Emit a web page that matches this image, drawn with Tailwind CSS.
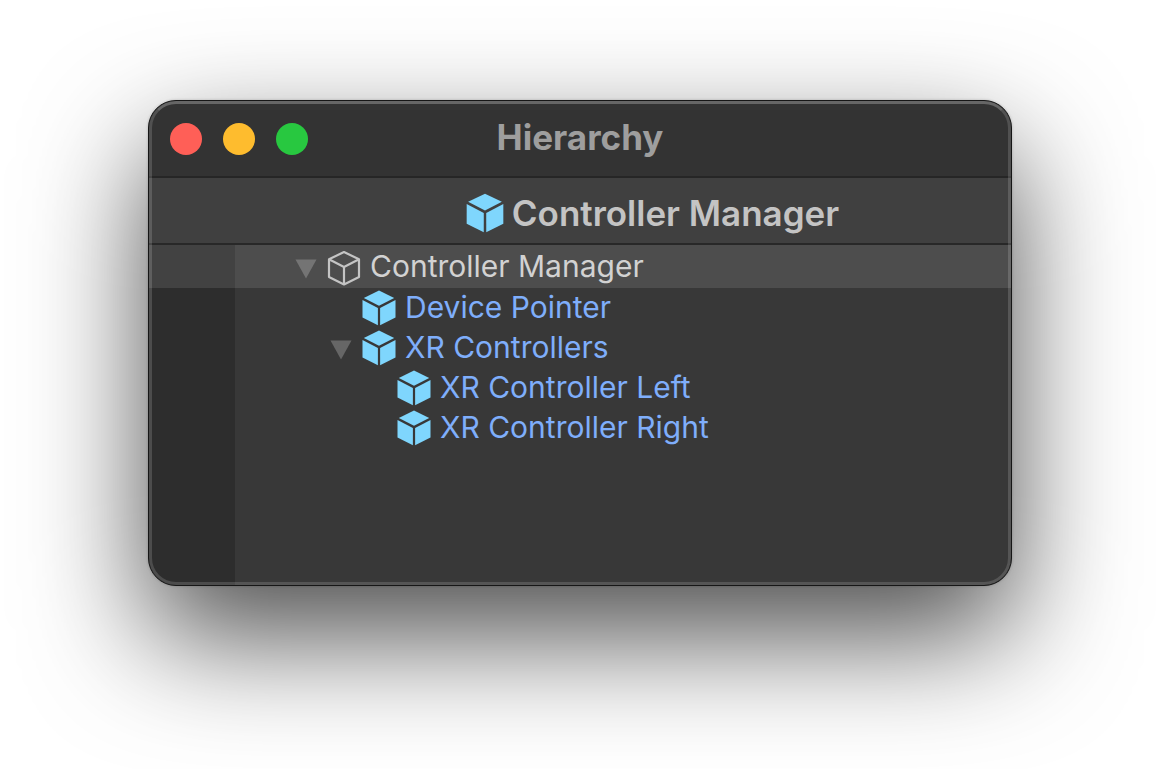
<!DOCTYPE html>
<html lang="en">
<head>
  <meta charset="UTF-8" />
  <meta name="viewport" content="width=device-width, initial-scale=1.0" />
  <title>Hierarchy</title>
  <script src="https://cdn.jsdelivr.net/npm/@tailwindcss/browser@4"></script>
</head>
<body class="bg-white min-h-screen px-[148px] py-[100px] font-['Inter','Liberation_Sans',sans-serif]">

  <!-- shared icons -->
  <svg class="hidden">
    <symbol id="cube" viewBox="0 0 34 36">
      <path d="M17 0.6 32.2 7.9 17 15.8 1.8 7.9Z" fill="#7fd6fd" />
      <path d="M0.5 10 15.9 18V35.3L0.5 27.6Z" fill="#7fd6fd" />
      <path d="M33.5 10 18.1 18V35.3L33.5 27.6Z" fill="#7fd6fd" />
    </symbol>
    <symbol id="cube-outline" viewBox="0 0 34 36">
      <path d="M17 2 32 9.3V27L17 34.4 2 27V9.3ZM2 9.3 17 17 32 9.3M17 17V34.4" fill="none" stroke="#c4c4c4" stroke-width="2.2" stroke-linejoin="round" />
    </symbol>
    <symbol id="arrow" viewBox="0 0 22 20">
      <path d="M0.5 0.5H21.5L11 19.5Z" fill="currentColor" />
    </symbol>
  </svg>

  <main class="relative border border-[#161616] rounded-[28px] overflow-hidden bg-[#383838] shadow-[0_50px_120px_rgba(0,0,0,0.7),0_0_3px_rgba(0,0,0,0.2)]">

    <header class="grid grid-cols-[1fr_auto_1fr] items-center h-[77px] px-[21px] bg-[#333333] border-b-2 border-[#262626]">
      <div class="flex gap-[21px]">
        <button aria-label="Close" class="w-8 h-8 rounded-full bg-[#ff5f57]"></button>
        <button aria-label="Minimize" class="w-8 h-8 rounded-full bg-[#febc2e]"></button>
        <button aria-label="Zoom" class="w-8 h-8 rounded-full bg-[#28c840]"></button>
      </div>
      <h1 class="text-[35px] leading-10 font-bold text-[#9e9e9e] pb-1">Hierarchy</h1>
    </header>

    <div class="flex items-center justify-center gap-2 h-[67px] pt-1 pl-[145px] bg-[#404040] border-b-2 border-[#282828]">
      <svg class="w-[38px] h-10"><use href="#cube" /></svg>
      <h2 class="text-[35px] leading-10 font-semibold text-[#c4c4c4]">Controller Manager</h2>
    </div>

    <ul class="text-[30px] leading-10 text-[#7faefb]">
      <li class="flex h-[43px] bg-[#4d4d4d] text-[#d2d2d2]">
        <span class="w-[86px] bg-[#424242]"></span>
        <div class="flex items-center pl-[60px]">
          <button aria-label="Collapse Controller Manager" class="mt-1 text-[#747474]"><svg class="w-[22px] h-5"><use href="#arrow" /></svg></button>
          <svg class="w-[34px] h-9 mt-0.5 ml-[10px] mr-[9px]"><use href="#cube-outline" /></svg>
          <span class="pb-0.5">Controller Manager</span>
        </div>
      </li>
      <li class="flex h-10">
        <span class="w-[86px] bg-[#2d2d2d]"></span>
        <div class="flex items-center pl-[127px]">
          <svg class="w-[34px] h-9 mr-[9px]"><use href="#cube" /></svg>
          <span class="pb-0.5">Device Pointer</span>
        </div>
      </li>
      <li class="flex h-10">
        <span class="w-[86px] bg-[#2d2d2d]"></span>
        <div class="flex items-center pl-[95px]">
          <button aria-label="Collapse XR Controllers" class="mt-1 text-[#666666]"><svg class="w-[22px] h-5"><use href="#arrow" /></svg></button>
          <svg class="w-[34px] h-9 ml-[10px] mr-[9px]"><use href="#cube" /></svg>
          <span class="pb-0.5">XR Controllers</span>
        </div>
      </li>
      <li class="flex h-10">
        <span class="w-[86px] bg-[#2d2d2d]"></span>
        <div class="flex items-center pl-[162px]">
          <svg class="w-[34px] h-9 mr-[9px]"><use href="#cube" /></svg>
          <span class="pb-0.5">XR Controller Left</span>
        </div>
      </li>
      <li class="flex h-10">
        <span class="w-[86px] bg-[#2d2d2d]"></span>
        <div class="flex items-center pl-[162px]">
          <svg class="w-[34px] h-9 mr-[9px]"><use href="#cube" /></svg>
          <span class="pb-0.5">XR Controller Right</span>
        </div>
      </li>
    </ul>
    <div class="w-[86px] h-[137px] bg-[#2d2d2d]"></div>

    <!-- light rim on the window edge -->
    <div class="absolute inset-0 rounded-[27px] border-[3px] border-white/15 border-t-white/25 pointer-events-none"></div>
  </main>

</body>
</html>
